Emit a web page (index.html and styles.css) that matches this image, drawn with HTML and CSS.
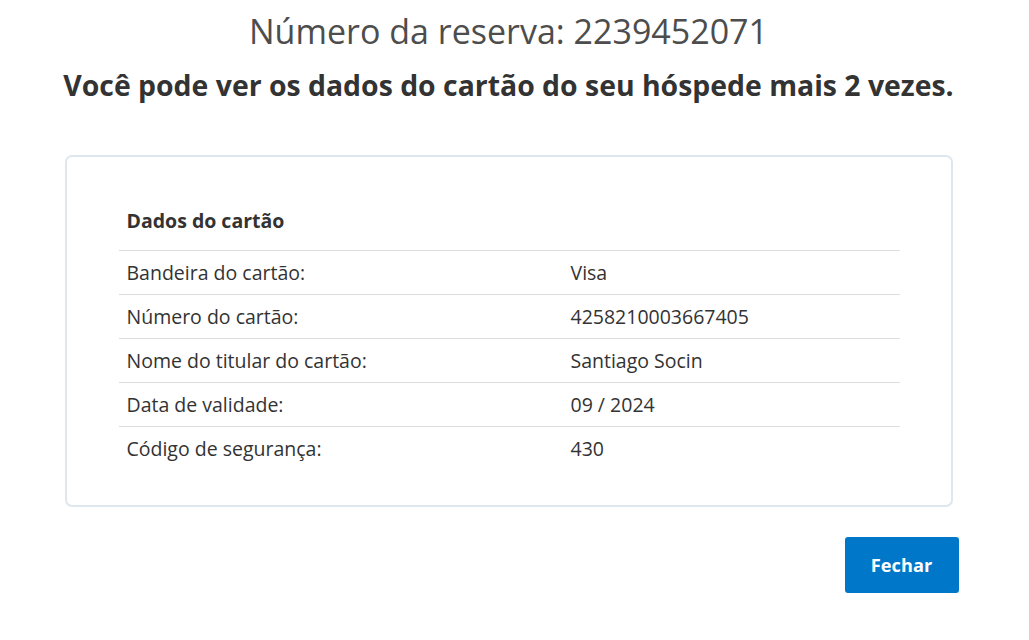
FILE: index.html
```html
<!DOCTYPE html>
<html lang="pt">
<head>
<meta charset="utf-8">
<link rel="stylesheet" href="styles.css">
</head>
<body>
<div class="page">
  <h1 class="title">Número da reserva: 2239452071</h1>
  <h2 class="subtitle">Você pode ver os dados do cartão do seu hóspede mais 2 vezes.</h2>
  <div class="card">
    <table class="details">
      <thead>
        <tr><th colspan="2">Dados do cartão</th></tr>
      </thead>
      <tbody>
        <tr><td class="label">Bandeira do cartão:</td><td>Visa</td></tr>
        <tr><td class="label">Número do cartão:</td><td>4258210003667405</td></tr>
        <tr><td class="label">Nome do titular do cartão:</td><td>Santiago Socin</td></tr>
        <tr><td class="label">Data de validade:</td><td>09 / 2024</td></tr>
        <tr><td class="label">Código de segurança:</td><td>430</td></tr>
      </tbody>
    </table>
  </div>
  <div class="actions">
    <button class="btn">Fechar</button>
  </div>
</div>
</body>
</html>
```

FILE: styles.css
```css
html, body {
  margin: 0;
  padding: 0;
  background: #ffffff;
}
body {
  font-family: "Open Sans", "Noto Sans", sans-serif;
  color: #333333;
  padding-right: 12px;
}
.page {
  width: 888px;
  margin: 0 auto;
  padding-top: 9px;
}
.title {
  margin: 0;
  text-align: center;
  font-weight: 400;
  font-size: 34px;
  line-height: 44px;
  color: #4d4d4d;
}
.subtitle {
  margin: 12px -60px 0;
  text-align: center;
  font-weight: 700;
  font-size: 28.4px;
  line-height: 40px;
  color: #333333;
}
.card {
  margin-top: 50px;
  border: 2px solid #dfe7ee;
  border-radius: 7px;
  padding: 44px 51px 35px 52px;
}
.details {
  width: 100%;
  border-collapse: collapse;
  font-size: 19.5px;
  color: #333333;
}
.details th {
  text-align: left;
  font-weight: 700;
  padding: 6px 8px 16px;
  line-height: 27px;
  border-bottom: 1px solid #dddddd;
}
.details td {
  padding: 0 8px;
  height: 43px;
  line-height: 26px;
  border-bottom: 1px solid #dddddd;
}
.details tbody tr:last-child td {
  border-bottom: none;
}
.details td.label {
  width: 428px;
}
.actions {
  display: flex;
  justify-content: flex-end;
  margin-top: 30px;
  margin-right: -6px;
}
.btn {
  width: 114px;
  height: 56px;
  border: none;
  border-radius: 3px;
  background: #0077c8;
  color: #ffffff;
  font-family: "Open Sans", "Noto Sans", sans-serif;
  font-weight: 700;
  font-size: 18.2px;
  cursor: pointer;
}
```
